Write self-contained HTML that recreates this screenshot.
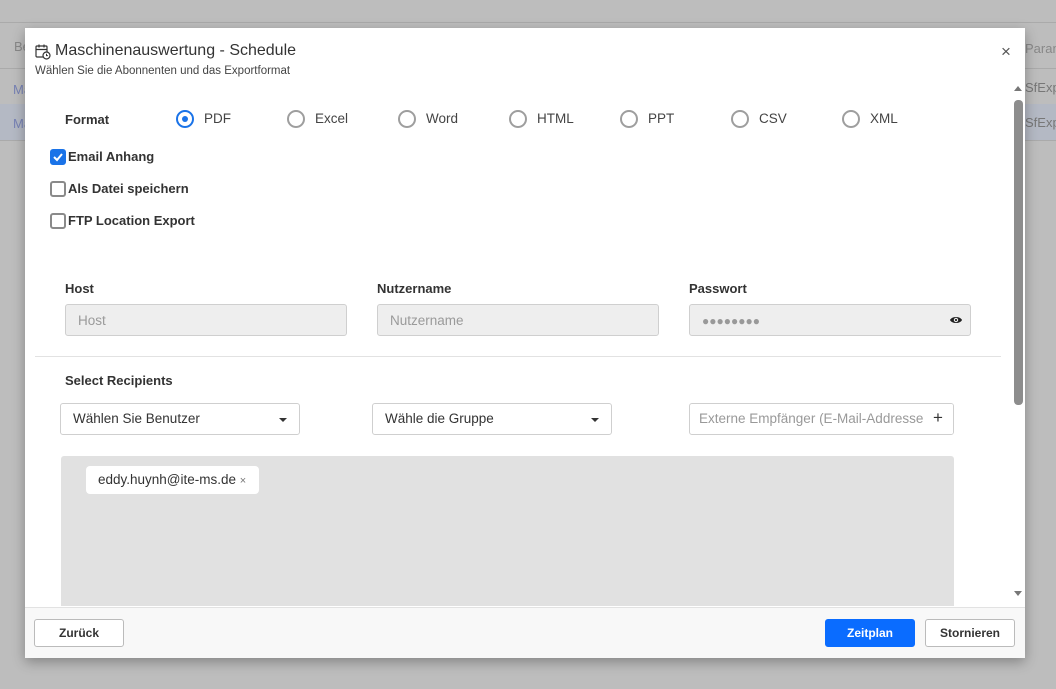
<!DOCTYPE html>
<html><head><meta charset="utf-8"><style>
*{box-sizing:border-box}
body{margin:0;width:1056px;height:689px;background:#bdbdbd;font-family:"Liberation Sans",sans-serif;position:relative;overflow:hidden;color:#333}
.a{position:absolute}
.lbl{font-size:13px;font-weight:bold;color:#333}
.radio{position:absolute;top:110px;width:18px;height:18px;border:2px solid #9e9e9e;border-radius:50%}
.rt{position:absolute;top:111px;font-size:13.5px;color:#444}
.cb{position:absolute;left:50px;width:16px;height:16px;border:2px solid #8a8a8a;border-radius:3px;background:#fff}
.ct{position:absolute;left:68px;font-size:13px;font-weight:bold;color:#333}
.inp{position:absolute;top:304px;height:32px;background:#eeeeee;border:1px solid #cfcfcf;border-radius:3px;font-size:13.5px;color:#9a9a9a;padding:8px 12px}
.sel{position:absolute;top:403px;height:32px;background:#fff;border:1px solid #cfcfcf;border-radius:3px;font-size:13.5px;color:#333;padding:7px 12px;white-space:nowrap}
.caret{position:absolute;right:12px;top:14px;border-left:4px solid transparent;border-right:4px solid transparent;border-top:4px solid #333}
.btn{position:absolute;top:619px;height:28px;border:1px solid #bbb;border-radius:3px;background:#fff;font-size:12px;font-weight:bold;color:#333;text-align:center;line-height:26px}
</style></head><body>
<div class="a" style="left:0;top:22px;width:1056px;height:1px;background:#aaa"></div>
<div class="a" style="left:0;top:68px;width:1056px;height:1px;background:#aaa"></div>
<div class="a" style="left:0;top:104px;width:1056px;height:36px;background:#b4b9c4"></div>
<div class="a" style="left:0;top:140px;width:1056px;height:1px;background:#aaa"></div>
<div class="a" style="left:14px;top:39px;font-size:13px;color:#888">Be</div>
<div class="a" style="left:13px;top:82px;font-size:13px;color:#7782b5">Ma</div>
<div class="a" style="left:13px;top:116px;font-size:13px;color:#7782b5">Ma</div>
<div class="a" style="left:1025px;top:41px;font-size:13px;color:#888">Param</div>
<div class="a" style="left:1025px;top:80px;font-size:13px;color:#777">SfExp=</div>
<div class="a" style="left:1025px;top:115px;font-size:13px;color:#777">SfExp=</div>

<div class="a" style="left:25px;top:28px;width:1000px;height:630px;background:#fff;box-shadow:0 4px 12px rgba(0,0,0,.3)">
</div>
<svg class="a" style="left:35px;top:43px" width="16" height="17" viewBox="0 0 16 17"><rect x="1" y="3" width="11" height="11" rx="1" fill="none" stroke="#333" stroke-width="1.2"/><path d="M1 6.5h11M4 1.5v3M9 1.5v3" stroke="#333" stroke-width="1.2"/><circle cx="11.5" cy="12.5" r="3.5" fill="#fff" stroke="#333" stroke-width="1.2"/><path d="M11.5 10.8v1.8h1.4" stroke="#333" fill="none"/></svg>
<div class="a" style="left:55px;top:42px;font-size:16px;color:#333">Maschinenauswertung - Schedule</div>
<div class="a" style="left:35px;top:65px;font-size:11.5px;color:#444">Wählen Sie die Abonnenten und das Exportformat</div>
<div class="a" style="left:1001px;top:42px;font-size:17px;color:#555">×</div>

<div class="a lbl" style="left:65px;top:112px">Format</div>
<div class="radio" style="left:176px;border-color:#1a73e8"><div style="position:absolute;left:4px;top:4px;width:6px;height:6px;border-radius:50%;background:#1a73e8"></div></div>
<div class="rt" style="left:204px">PDF</div>
<div class="radio" style="left:287px"></div><div class="rt" style="left:315px">Excel</div>
<div class="radio" style="left:398px"></div><div class="rt" style="left:426px">Word</div>
<div class="radio" style="left:509px"></div><div class="rt" style="left:537px">HTML</div>
<div class="radio" style="left:620px"></div><div class="rt" style="left:648px">PPT</div>
<div class="radio" style="left:731px"></div><div class="rt" style="left:759px">CSV</div>
<div class="radio" style="left:842px"></div><div class="rt" style="left:870px">XML</div>

<div class="cb" style="top:149px;background:#1a73e8;border-color:#1a73e8"><svg width="12" height="12" style="position:absolute;left:0;top:0" viewBox="0 0 12 12"><path d="M2 6l3 3 5-6" stroke="#fff" stroke-width="2" fill="none"/></svg></div>
<div class="ct" style="top:149px">Email Anhang</div>
<div class="cb" style="top:181px"></div><div class="ct" style="top:181px">Als Datei speichern</div>
<div class="cb" style="top:213px"></div><div class="ct" style="top:213px">FTP Location Export</div>

<div class="a lbl" style="left:65px;top:281px">Host</div>
<div class="a lbl" style="left:377px;top:281px">Nutzername</div>
<div class="a lbl" style="left:689px;top:281px">Passwort</div>
<div class="inp" style="left:65px;width:282px">Host</div>
<div class="inp" style="left:377px;width:282px">Nutzername</div>
<div class="inp" style="left:689px;width:282px;color:#999;letter-spacing:0px;font-size:12px;padding-top:9px">●●●●●●●●
<svg style="position:absolute;right:7px;top:10px" width="14" height="10" viewBox="0 0 14 10"><path d="M1 5C3 1 11 1 13 5 11 9 3 9 1 5z" fill="#222"/><circle cx="7" cy="5" r="2.2" fill="#eee"/><circle cx="7" cy="5" r="1.1" fill="#222"/></svg></div>
<div class="a" style="left:35px;top:356px;width:966px;height:1px;background:#e2e2e2"></div>

<div class="a lbl" style="left:65px;top:373px">Select Recipients</div>
<div class="sel" style="left:60px;width:240px">Wählen Sie Benutzer<div class="caret"></div></div>
<div class="sel" style="left:372px;width:240px">Wähle die Gruppe<div class="caret"></div></div>
<div class="sel" style="left:689px;width:265px;color:#999;padding-left:9px;overflow:hidden">Externe Empfänger (E-Mail-Addresse<span style="position:absolute;right:0;top:0;width:30px;height:30px;background:#fff;color:#333;font-size:17px;text-align:center;line-height:28px">+</span></div>

<div class="a" style="left:61px;top:456px;width:893px;height:150px;background:#e1e1e1;border-radius:3px 3px 0 0"></div>
<div class="a" style="left:86px;top:466px;width:173px;height:28px;background:#fff;border-radius:4px;font-size:13.5px;color:#333;padding:6px 12px;white-space:nowrap">eddy.huynh@ite-ms.de <span style="font-size:11px;color:#777">×</span></div>

<div class="a" style="left:1014px;top:100px;width:9px;height:305px;background:#8d8d8d;border-radius:4px"></div>
<div class="a" style="left:1014px;top:86px;border-left:4px solid transparent;border-right:4px solid transparent;border-bottom:5px solid #777"></div>
<div class="a" style="left:1014px;top:591px;border-left:4px solid transparent;border-right:4px solid transparent;border-top:5px solid #777"></div>

<div class="a" style="left:25px;top:607px;width:1000px;height:51px;background:#f8f8f8;border-top:1px solid #e2e2e2"></div>
<div class="btn" style="left:34px;width:90px">Zurück</div>
<div class="btn" style="left:825px;width:90px;background:#0a6cff;border-color:#0a6cff;color:#fff">Zeitplan</div>
<div class="btn" style="left:925px;width:90px">Stornieren</div>
</body></html>
